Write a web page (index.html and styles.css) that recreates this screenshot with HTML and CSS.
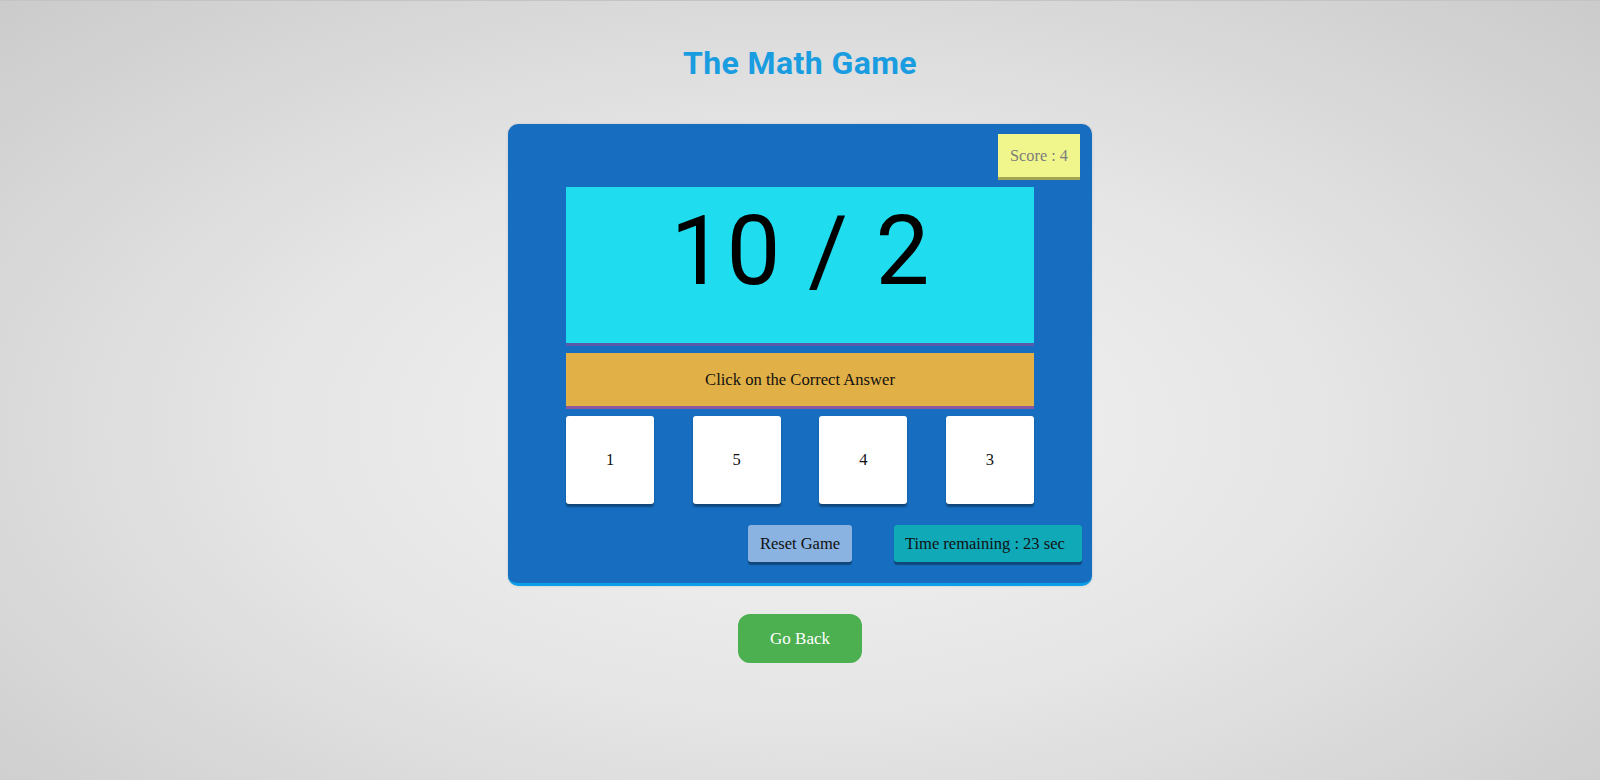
FILE: index.html
```html
<!DOCTYPE html>
<html lang="en">
<head>
<meta charset="utf-8">
<title>The Math Game</title>
<link rel="stylesheet" href="styles.css">
</head>
<body>
  <div class="page">
    <h1 class="title">The Math Game</h1>
    <div class="card">
      <div class="score-row">
        <div class="score">Score : 4</div>
      </div>
      <div class="question">10 / 2</div>
      <div class="instruction">Click on the Correct Answer</div>
      <div class="answers">
        <div class="answer">1</div>
        <div class="answer">5</div>
        <div class="answer">4</div>
        <div class="answer">3</div>
      </div>
      <div class="controls">
        <div class="btn reset">Reset Game</div>
        <div class="btn timer">Time remaining : 23 sec</div>
      </div>
    </div>
    <div class="back-row">
      <div class="back">Go Back</div>
    </div>
  </div>
</body>
</html>
```

FILE: styles.css
```css
html, body {
  margin: 0;
  padding: 0;
}

body {
  min-height: 780px;
  background: radial-gradient(ellipse at 50% 55%, #f3f3f3 0%, #e6e6e6 45%, #cbcbcb 100%);
  border-top: 1px solid #c4c4c4;
  box-sizing: border-box;
  font-family: "Liberation Serif", "Times New Roman", serif;
  color: #111;
}

.page {
  display: flex;
  flex-direction: column;
  align-items: center;
  padding-top: 42px;
}

.title {
  margin: 0;
  font-family: Roboto, "Noto Sans", sans-serif;
  font-weight: 700;
  font-size: 32px;
  line-height: 40px;
  letter-spacing: 0.4px;
  color: #1a9de0;
}

.card {
  margin-top: 41px;
  width: 584px;
  box-sizing: border-box;
  padding: 10px 10px 21px;
  background: #176ec1;
  border-radius: 10px;
  border-bottom: 3px solid #0c9fe9;
  box-shadow: 0 0 3px rgba(0, 0, 0, 0.12);
  display: flex;
  flex-direction: column;
}

.score-row {
  display: flex;
  justify-content: flex-end;
  padding-right: 2px;
  margin-bottom: 10px;
}

.score {
  width: 82px;
  height: 43px;
  display: flex;
  align-items: center;
  justify-content: center;
  background: #f0f68b;
  box-shadow: 0 3px 0 #a4a455;
  color: #7d7d7d;
  font-size: 16.3px;
}

.question {
  width: 468px;
  height: 156px;
  box-sizing: border-box;
  margin: 0 auto 10px;
  padding: 16px 0 0 2px;
  background: #1fdcee;
  box-shadow: 0 3px 0 #5a58a8;
  text-align: center;
  font-family: Roboto, "Noto Sans", sans-serif;
  font-size: 96px;
  line-height: 96px;
  letter-spacing: 2px;
  color: #000;
}

.instruction {
  width: 468px;
  height: 53px;
  margin: 0 auto 10px;
  background: #e1b046;
  box-shadow: 0 3px 0 #8b5a9e;
  display: flex;
  align-items: center;
  justify-content: center;
  font-size: 16.6px;
}

.answers {
  width: 468px;
  margin: 0 auto 21px;
  display: flex;
  justify-content: space-between;
}

.answer {
  width: 88px;
  height: 88px;
  background: #fff;
  border-radius: 3px;
  box-shadow: 0 3px 2px rgba(0, 0, 0, 0.35);
  display: flex;
  align-items: center;
  justify-content: center;
  font-size: 16.5px;
}

.controls {
  display: flex;
  justify-content: flex-end;
  gap: 42px;
}

.btn {
  height: 37px;
  display: flex;
  align-items: center;
  border-radius: 3px;
  box-shadow: 0 3px 1px rgba(0, 0, 0, 0.35);
  font-size: 16.5px;
}

.reset {
  width: 104px;
  justify-content: center;
  background: #8ab3e2;
}

.timer {
  width: 188px;
  box-sizing: border-box;
  padding-left: 11px;
  background: #10a9b8;
}

.back-row {
  margin-top: 28px;
  display: flex;
  justify-content: center;
}

.back {
  width: 124px;
  height: 49px;
  border-radius: 12px;
  background: #4caf50;
  color: #fff;
  display: flex;
  align-items: center;
  justify-content: center;
  font-size: 17px;
}
```
